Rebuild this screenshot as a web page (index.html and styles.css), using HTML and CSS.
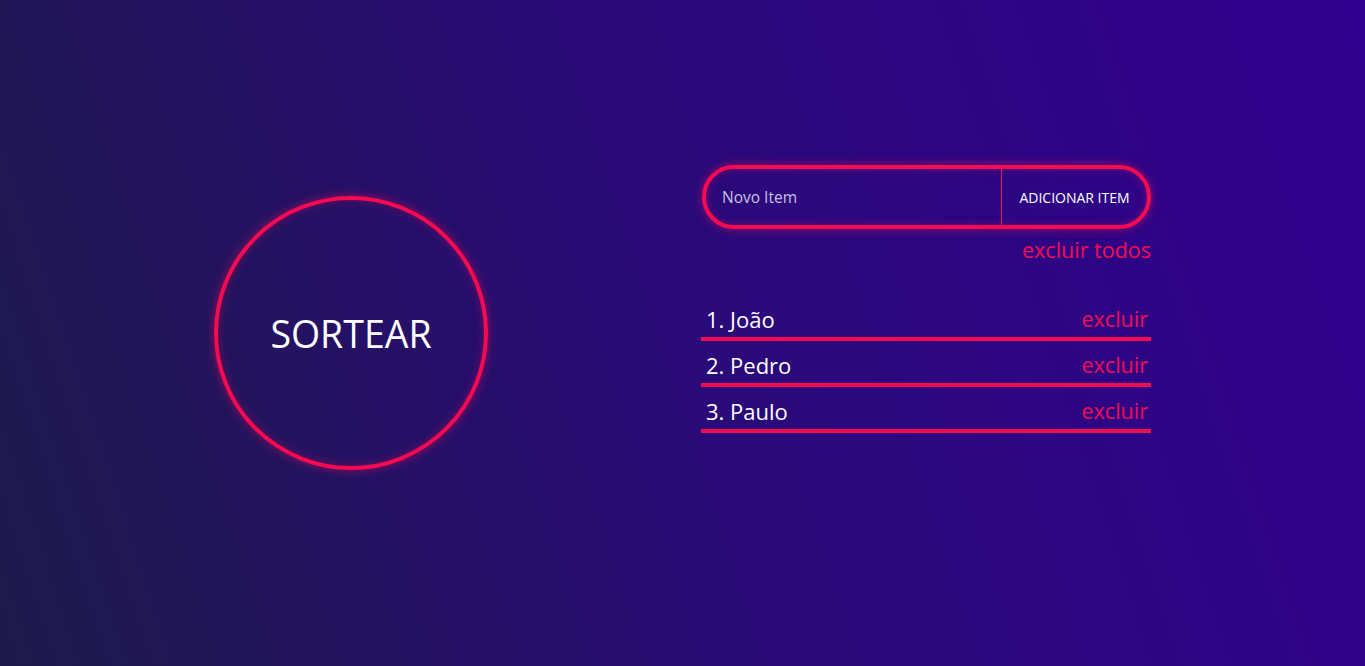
FILE: index.html
```html
<!DOCTYPE html>
<html lang="pt-BR">
<head>
<meta charset="utf-8">
<title>Sorteio</title>
<link rel="stylesheet" href="styles.css">
</head>
<body>
<main class="page">
  <section class="left">
    <button class="draw">SORTEAR</button>
  </section>
  <section class="right">
    <form class="add-form">
      <input class="add-input" type="text" placeholder="Novo Item">
      <button class="add-btn" type="button">ADICIONAR ITEM</button>
    </form>
    <div class="clear-row"><a class="clear-all">excluir todos</a></div>
    <ol class="items">
      <li class="item"><span class="name">1. João</span><a class="del">excluir</a></li>
      <li class="item"><span class="name">2. Pedro</span><a class="del">excluir</a></li>
      <li class="item"><span class="name">3. Paulo</span><a class="del">excluir</a></li>
    </ol>
  </section>
</main>
</body>
</html>
```
FILE: styles.css
```css
html, body {
  margin: 0;
  padding: 0;
  height: 100%;
}
body {
  background: linear-gradient(72deg, #1e1b4b 0%, #2a0a78 50%, #31008f 100%);
  font-family: "Open Sans", "Noto Sans", sans-serif;
  color: #ffffff;
  overflow: hidden;
}
.page {
  display: flex;
  align-items: flex-start;
  height: 666px;
  padding-left: 214px;
  box-sizing: border-box;
}
.left {
  padding-top: 196px;
}
.draw {
  width: 274px;
  height: 274px;
  border-radius: 50%;
  border: 4px solid #f70a51;
  background: transparent;
  color: #ffffff;
  font-family: inherit;
  font-size: 37.5px;
  font-weight: 400;
  box-shadow: 0 0 10px rgba(247, 10, 81, 0.55), inset 0 0 8px rgba(247, 10, 81, 0.35);
  display: flex;
  align-items: center;
  justify-content: center;
  padding: 0;
  cursor: pointer;
}
.right {
  margin-left: 213px;
  padding-top: 165px;
  width: 450px;
}
.add-form {
  display: flex;
  margin: 0 0 0 1px;
  width: 449px;
  height: 64px;
  box-sizing: border-box;
  border: 4px solid #f70a51;
  border-radius: 32px;
  box-shadow: 0 0 10px rgba(247, 10, 81, 0.55), inset 0 0 8px rgba(247, 10, 81, 0.3);
  overflow: hidden;
}
.add-input {
  flex: 1;
  min-width: 0;
  background: transparent;
  border: none;
  border-right: 1px solid #f70a51;
  outline: none;
  padding: 0 0 0 16px;
  font-family: inherit;
  font-size: 15.5px;
  color: #ffffff;
}
.add-input::placeholder {
  color: #c9c2e4;
  opacity: 1;
}
.add-btn {
  width: 145px;
  background: transparent;
  border: none;
  color: #ffffff;
  font-family: inherit;
  font-size: 14px;
  padding: 0;
  cursor: pointer;
}
.clear-row {
  display: flex;
  justify-content: flex-end;
  margin-top: 8px;
}
.clear-all {
  color: #f70a51;
  font-size: 21.5px;
  line-height: 26px;
  cursor: pointer;
}
.items {
  list-style: none;
  margin: 36px 0 0 0;
  padding: 0;
}
.item {
  display: flex;
  justify-content: space-between;
  align-items: center;
  padding: 2px 3px 0 5px;
  height: 36px;
  border-bottom: 4px solid #f70a51;
  margin-bottom: 4px;
  line-height: 28px;
}
.name {
  color: #ffffff;
  font-size: 22px;
}
.del {
  color: #f70a51;
  font-size: 21.5px;
  cursor: pointer;
}
```
